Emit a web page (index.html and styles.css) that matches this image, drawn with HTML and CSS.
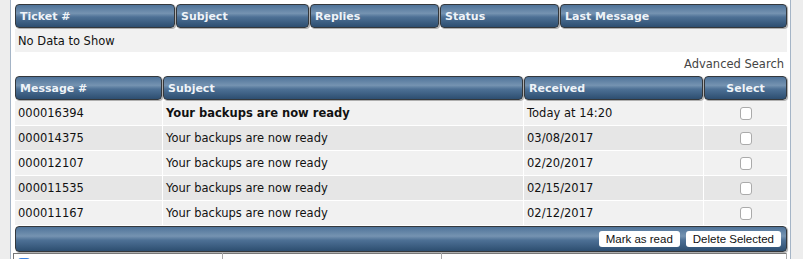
FILE: index.html
```html
<!DOCTYPE html>
<html lang="en">
<head>
  <meta charset="UTF-8" />
  <title>Support Tickets</title>
  <link rel="stylesheet" href="styles.css">
</head>
<body>
  <div class="page">
    <table class="grid tickets">
      <thead>
        <tr>
          <th class="c-ticket">Ticket #</th>
          <th class="c-tsubject">Subject</th>
          <th class="c-replies">Replies</th>
          <th class="c-status">Status</th>
          <th>Last Message</th>
        </tr>
      </thead>
      <tbody>
        <tr class="odd"><td colspan="5">No Data to Show</td></tr>
      </tbody>
    </table>

    <div class="adv-search">Advanced Search</div>

    <table class="grid messages">
      <thead>
        <tr>
          <th class="c-msg">Message #</th>
          <th>Subject</th>
          <th class="c-received">Received</th>
          <th class="c-select">Select</th>
        </tr>
      </thead>
      <tbody>
        <tr class="odd unread">
          <td>000016394</td>
          <td class="subj">Your backups are now ready</td>
          <td>Today at 14:20</td>
          <td class="sel"><input type="checkbox" class="cb" /></td>
        </tr>
        <tr class="even">
          <td>000014375</td>
          <td>Your backups are now ready</td>
          <td>03/08/2017</td>
          <td class="sel"><input type="checkbox" class="cb" /></td>
        </tr>
        <tr class="odd">
          <td>000012107</td>
          <td>Your backups are now ready</td>
          <td>02/20/2017</td>
          <td class="sel"><input type="checkbox" class="cb" /></td>
        </tr>
        <tr class="even">
          <td>000011535</td>
          <td>Your backups are now ready</td>
          <td>02/15/2017</td>
          <td class="sel"><input type="checkbox" class="cb" /></td>
        </tr>
        <tr class="odd">
          <td>000011167</td>
          <td>Your backups are now ready</td>
          <td>02/12/2017</td>
          <td class="sel"><input type="checkbox" class="cb" /></td>
        </tr>
      </tbody>
      <tfoot>
        <tr>
          <td colspan="4" class="bar">
            <div class="actions">
              <button class="btn">Mark as read</button>
              <button class="btn">Delete Selected</button>
            </div>
          </td>
        </tr>
      </tfoot>
    </table>

    <table class="options">
      <tr>
        <td class="opt-a"><span class="blue-cb"></span> Email me a copy of all messages</td>
        <td class="opt-b">Add this message to favorites</td>
        <td></td>
      </tr>
    </table>
  </div>
</body>
</html>
```

FILE: styles.css
```css
body {
  margin: 0;
  background: #ededed;
  font-family: "DejaVu Sans", Verdana, sans-serif;
  font-size: 11px;
  color: #111;
}
.page {
  margin: 0 12px 0 10px;
  background: #fff;
  border-left: 1px solid #a4b4c6;
  border-right: 1px solid #a4b4c6;
  padding: 3px 2px 0 3px;
  min-height: 300px;
}
.grid {
  width: 100%;
  border-collapse: separate;
  border-spacing: 1px;
}
.grid th {
  height: 24px;
  box-sizing: border-box;
  padding: 0 4px;
  text-align: left;
  font-weight: bold;
  color: #eef3f8;
  background: linear-gradient(to bottom, #4f7399 0%, #7593b1 38%, #4d7095 55%, #2d4e70 100%);
  border: 1px solid #34383c;
  border-radius: 4px;
  box-shadow: 1px 1px 1px rgba(0, 0, 0, 0.35);
}
.grid td {
  height: 24px;
  box-sizing: border-box;
  padding: 0 3px;
  font-size: 11.5px;
}
.tickets td {
  height: 23px;
}
.odd td {
  background: #f1f1f1;
}
.even td {
  background: #e6e6e6;
}
.c-ticket { width: 160px; }
.c-tsubject { width: 133px; }
.c-replies { width: 129px; }
.c-status { width: 119px; }
.c-msg { width: 147px; }
.c-received { width: 179px; }
.grid th.c-select {
  width: 83px;
  text-align: center;
}
.unread .subj {
  font-weight: bold;
}
.sel {
  text-align: center;
}
.cb {
  appearance: none;
  -webkit-appearance: none;
  width: 12px;
  height: 13px;
  margin: 0;
  vertical-align: middle;
  background: #fff;
  border: 1px solid #aaa;
  border-radius: 3px;
}
.adv-search {
  height: 22px;
  line-height: 22px;
  text-align: right;
  padding-right: 4px;
  font-size: 11.5px;
  color: #444;
}
.grid td.bar {
  height: 26px;
  padding: 0 5px 0 0;
  background: linear-gradient(to bottom, #4f7399 0%, #7593b1 38%, #4d7095 55%, #2d4e70 100%);
  border: 1px solid #34383c;
  border-radius: 4px;
  box-shadow: 1px 1px 1px rgba(0, 0, 0, 0.35);
}
.actions {
  display: flex;
  justify-content: flex-end;
  gap: 6px;
}
.btn {
  height: 16px;
  padding: 0 7px;
  font-family: "Liberation Sans", Arial, sans-serif;
  font-size: 11.5px;
  color: #111;
  background: #fff;
  border: none;
  border-radius: 3px;
  line-height: 16px;
}
.options {
  width: 100%;
  margin-left: -1px;
  border-collapse: collapse;
  border-top: 1px solid #777;
  border-left: 1px solid #777;
  color: #555;
}
.options td {
  padding: 3px 4px;
  border-right: 1px solid #aaa;
}
.opt-a { width: 200px; }
.opt-b { width: 210px; }
.blue-cb {
  display: inline-block;
  width: 12px;
  height: 12px;
  border-radius: 3px;
  background: #3b82e0;
  vertical-align: middle;
}
```
